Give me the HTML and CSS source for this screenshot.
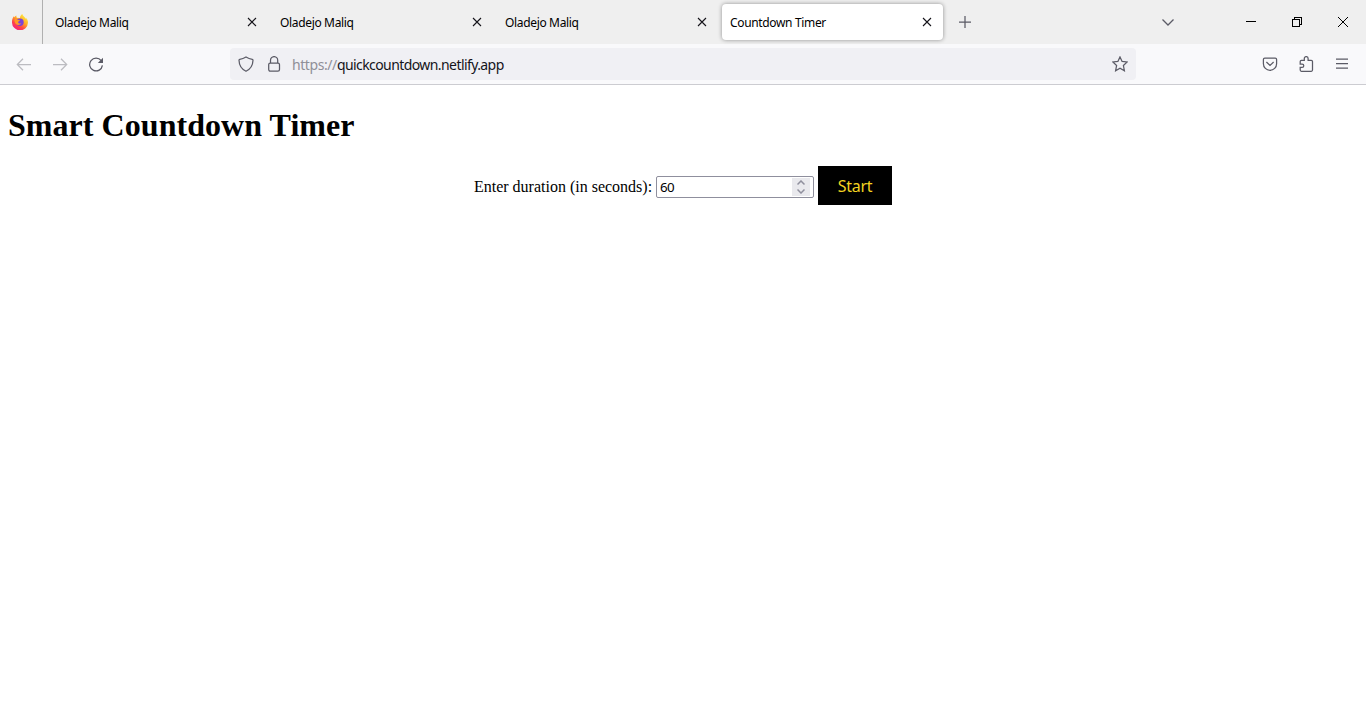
FILE: index.html
```html
<!DOCTYPE html>
<html lang="en">
<head>
<meta charset="utf-8">
<title>Countdown Timer</title>
<link rel="stylesheet" href="styles.css">
</head>
<body>
<header class="tabbar">
  <div class="home">
    <svg width="16" height="16" viewBox="0 0 16 16">
      <defs>
        <linearGradient id="flame" x1="0.85" y1="0.05" x2="0.2" y2="1"><stop offset="0" stop-color="#fff24a"/><stop offset=".4" stop-color="#ffaa22"/><stop offset=".68" stop-color="#ff4545"/><stop offset="1" stop-color="#f0168c"/></linearGradient>
      </defs>
      <path fill="url(#flame)" d="M15.4 5.7c-.3-.8-1-1.700-1.600-2 .4.800.6 1.300.7 1.900C13.600 3.400 10.700 2.400 10.300 0 8.800.9 7.900 2.500 8 4L4.800 3.800C4.400 3.200 4.300 2.300 4.400 1.500 3.200 2 2.500 2.900 2 3.500c-.2-.3-.2-1 0-1.400C.9 3.200 0 5.500 0 8.100A8 8 0 0 0 16 8.600c0-1-.2-2-.6-2.900z"/>
      <circle cx="8" cy="8.200" r="3.700" fill="#7a42d8"/>
      <path fill="#ff9a26" d="M2.600 5.500c1.300-.7 2.300-.3 3 .2.800.2 1.700.1 2.400.5-.1.900-1.700 1-1.900 1.800.1 1.500 1.700 1.900 3.200 1.300-1.200 2-3.800 2.300-5.400.6C2.700 8.800 2.300 7 2.600 5.500z"/>
    </svg>
  </div>
  <nav class="tabs">
    <div class="tab"><span class="title">Oladejo Maliq</span><svg class="close" viewBox="0 0 10 10"><path d="M1 1l8 8M9 1L1 9"/></svg></div>
    <div class="tab"><span class="title">Oladejo Maliq</span><svg class="close" viewBox="0 0 10 10"><path d="M1 1l8 8M9 1L1 9"/></svg></div>
    <div class="tab"><span class="title">Oladejo Maliq</span><svg class="close" viewBox="0 0 10 10"><path d="M1 1l8 8M9 1L1 9"/></svg></div>
    <div class="tab active"><span class="title">Countdown Timer</span><svg class="close" viewBox="0 0 10 10"><path d="M1 1l8 8M9 1L1 9"/></svg></div>
  </nav>
  <svg class="plus" width="12" height="12" viewBox="0 0 12 12"><path d="M6 0v12M0 6h12"/></svg>
  <div class="window-controls">
    <svg class="chevron" width="12" height="7" viewBox="0 0 12 7"><path d="M.5.5L6 6l5.500-5.500"/></svg>
    <svg class="minimize" width="10" height="10" viewBox="0 0 10 10" shape-rendering="crispEdges"><path d="M0 4.500h10"/></svg>
    <svg class="restore" width="10" height="10" viewBox="0 0 10 10" shape-rendering="crispEdges"><path d="M.5 2.500h7v7h-7zM2.500 2.500v-2h7v7h-2"/></svg>
    <svg class="quit" width="10" height="10" viewBox="0 0 10 10"><path d="M0 0l10 10M10 0L0 10"/></svg>
  </div>
</header>
<div class="toolbar">
  <div class="navigation">
    <svg class="icon dim" viewBox="0 0 16 16"><path d="M15 8.500H1.500M7 2.800L1.300 8.500 7 14.200"/></svg>
    <svg class="icon dim" viewBox="0 0 16 16"><path d="M1 8.500h13.500M9 2.800L14.700 8.500 9 14.200"/></svg>
    <svg class="icon" viewBox="0 0 16 16"><path d="M13.200 4.700A6.400 6.400 0 1 0 14.400 9.400"/><path class="solid" d="M15 1.800V7H9.800z"/></svg>
  </div>
  <div class="address">
    <svg class="icon" viewBox="0 0 16 16"><path d="M8 .9C6.300 2 3.700 3 1.700 3.300 1 3.400 1 3.700 1 4.300 1.200 10 3.700 13.300 8 15.200c4.300-1.900 6.800-5.200 7-10.900 0-.6 0-.9-.7-1C12.300 3 9.700 2 8 .9z"/></svg>
    <svg class="icon" viewBox="0 0 16 16"><rect x="2.700" y="7" width="10.800" height="8.200" rx="1.600"/><path d="M4.500 7V4.200a3.600 3.600 0 0 1 7.200 0V7"/></svg>
    <div class="url"><span class="scheme">https://</span>quickcountdown.netlify.app</div>
    <svg class="icon star" viewBox="0 0 16 16"><path d="M8 .9l2.100 4.500 5 .6-3.700 3.500 1 5.200L8 12.200l-4.400 2.500 1-5.200L.9 6l5-.6z"/></svg>
  </div>
  <div class="actions">
    <svg class="icon" viewBox="0 0 16 16"><path d="M2.800 2.200h10.400c.9 0 1.400.5 1.400 1.400v4.100a6.600 6.600 0 0 1-13.200 0V3.600c0-.9.500-1.400 1.400-1.400zM4.400 6L8 9.500 11.600 6"/></svg>
    <svg class="icon" viewBox="0 0 16 16"><path d="M2.200 5.500c0-.8.400-1.200 1.200-1.200h2.900V2.500a1.900 1.900 0 0 1 3.800 0v1.800h3.200c.8 0 1.200.4 1.200 1.200v8.600c0 .8-.4 1.200-1.200 1.200H3.400c-.8 0-1.200-.4-1.200-1.200v-2.700h1.900a1.700 1.700 0 0 0 0-3.400H2.200z"/></svg>
    <svg class="icon menu" viewBox="0 0 16 16"><path d="M2 3.200h12M2 7.700h12M2 12.200h12"/></svg>
  </div>
</div>
<main class="page">
  <h1 class="heading">Smart Countdown Timer</h1>
  <form class="timer">
    <label class="label" for="duration">Enter duration (in seconds):</label>
    <div class="field">
      <input class="number" id="duration" type="text" value="60">
      <div class="spinner"><svg width="8" height="14" viewBox="0 0 8 14"><path d="M.5 4.500L4 1l3.500 3.500M.5 9.500L4 13l3.500-3.500"/></svg></div>
    </div>
    <button class="start" type="button"><span>Start</span></button>
  </form>
</main>
</body>
</html>
```

FILE: styles.css
```css
* { box-sizing: border-box; }
body { margin: 0; background: #fff; color: #000; overflow: hidden; }
svg { display: block; flex: none; fill: none; stroke: #5b5b66; stroke-width: 1.25; }
.tabbar { display: flex; align-items: center; height: 44px; background: #efefef; font: 12px/16px "Noto Sans", sans-serif; }
.home { width: 43px; height: 44px; border-right: 1px solid #b0b0b0; padding: 14px 0 0 12px; }
.home svg { stroke: none; }
.tabs { display: flex; margin-left: 2px; }
.tab { display: flex; align-items: center; justify-content: space-between; width: 221px; height: 36px; margin: 0 2px; padding: 0 11px 0 8px; border-radius: 4px; white-space: nowrap; letter-spacing: -.34px; }
.title { padding-top: 2px; }
.active { background: #fff; box-shadow: 0 0 4px rgba(0, 0, 0, .4); }
.close { width: 10px; height: 10px; stroke: #15141a; stroke-width: 1.1; }
.plus { margin-left: 14px; }
.window-controls { display: flex; align-items: center; margin-left: auto; padding-right: 18px; }
.window-controls svg { stroke: #000; stroke-width: 1; }
.window-controls .chevron { stroke: #5b5b66; stroke-width: 1.3; margin-right: 72px; }
.minimize, .restore { margin-right: 36px; }
.toolbar { display: flex; align-items: center; height: 41px; background: #f9f9fb; border-bottom: 1px solid #ccccd1; }
.icon { width: 16px; height: 16px; }
.navigation { display: flex; gap: 20px; width: 230px; padding-left: 16px; }
.dim { stroke: #bcbcc1; }
.solid { fill: #5b5b66; stroke: none; }
.address { display: flex; align-items: center; width: 906px; height: 32px; padding: 0 8px; background: #f0f0f4; border-radius: 4px; }
.address .icon + .icon { margin-left: 12px; }
.url { margin-left: 10px; padding-top: 2px; color: #15141a; font: 14px/20px "Noto Sans", sans-serif; letter-spacing: -.58px; white-space: nowrap; }
.scheme { color: #8f8f98; letter-spacing: -.42px; }
.star { margin-left: auto; }
.actions { display: flex; gap: 20px; margin-left: auto; padding-right: 16px; }
.page { padding: 0 8px; font: 16px/18px "Liberation Serif", serif; }
.heading { margin: 22px 0; font-size: 32px; line-height: 37px; font-weight: bold; letter-spacing: .05px; }
.timer { display: flex; justify-content: center; align-items: center; height: 39px; }
.label { margin: 3px 4px 0 0; white-space: nowrap; }
.field { display: flex; align-items: center; width: 158px; height: 22px; margin: 3px 4px 0 0; padding: 1px 3px; border: 1px solid #8f8f9d; border-radius: 2px; background: #fff; }
.number { flex: 1; min-width: 0; padding: 0; border: 0; outline: 0; background: none; font: 13.333px/18px "Noto Sans", sans-serif; letter-spacing: -.6px; }
.spinner { display: flex; align-items: center; justify-content: center; width: 18px; height: 18px; background: #e9e9ed; }
.spinner svg { stroke: #8f8f9d; stroke-width: 1.5; }
.start { width: 74px; height: 39px; padding: 0; border: 0; background: #000; color: #f3d321; font: 16px/20px "Noto Sans", sans-serif; letter-spacing: -.3px; }
```
